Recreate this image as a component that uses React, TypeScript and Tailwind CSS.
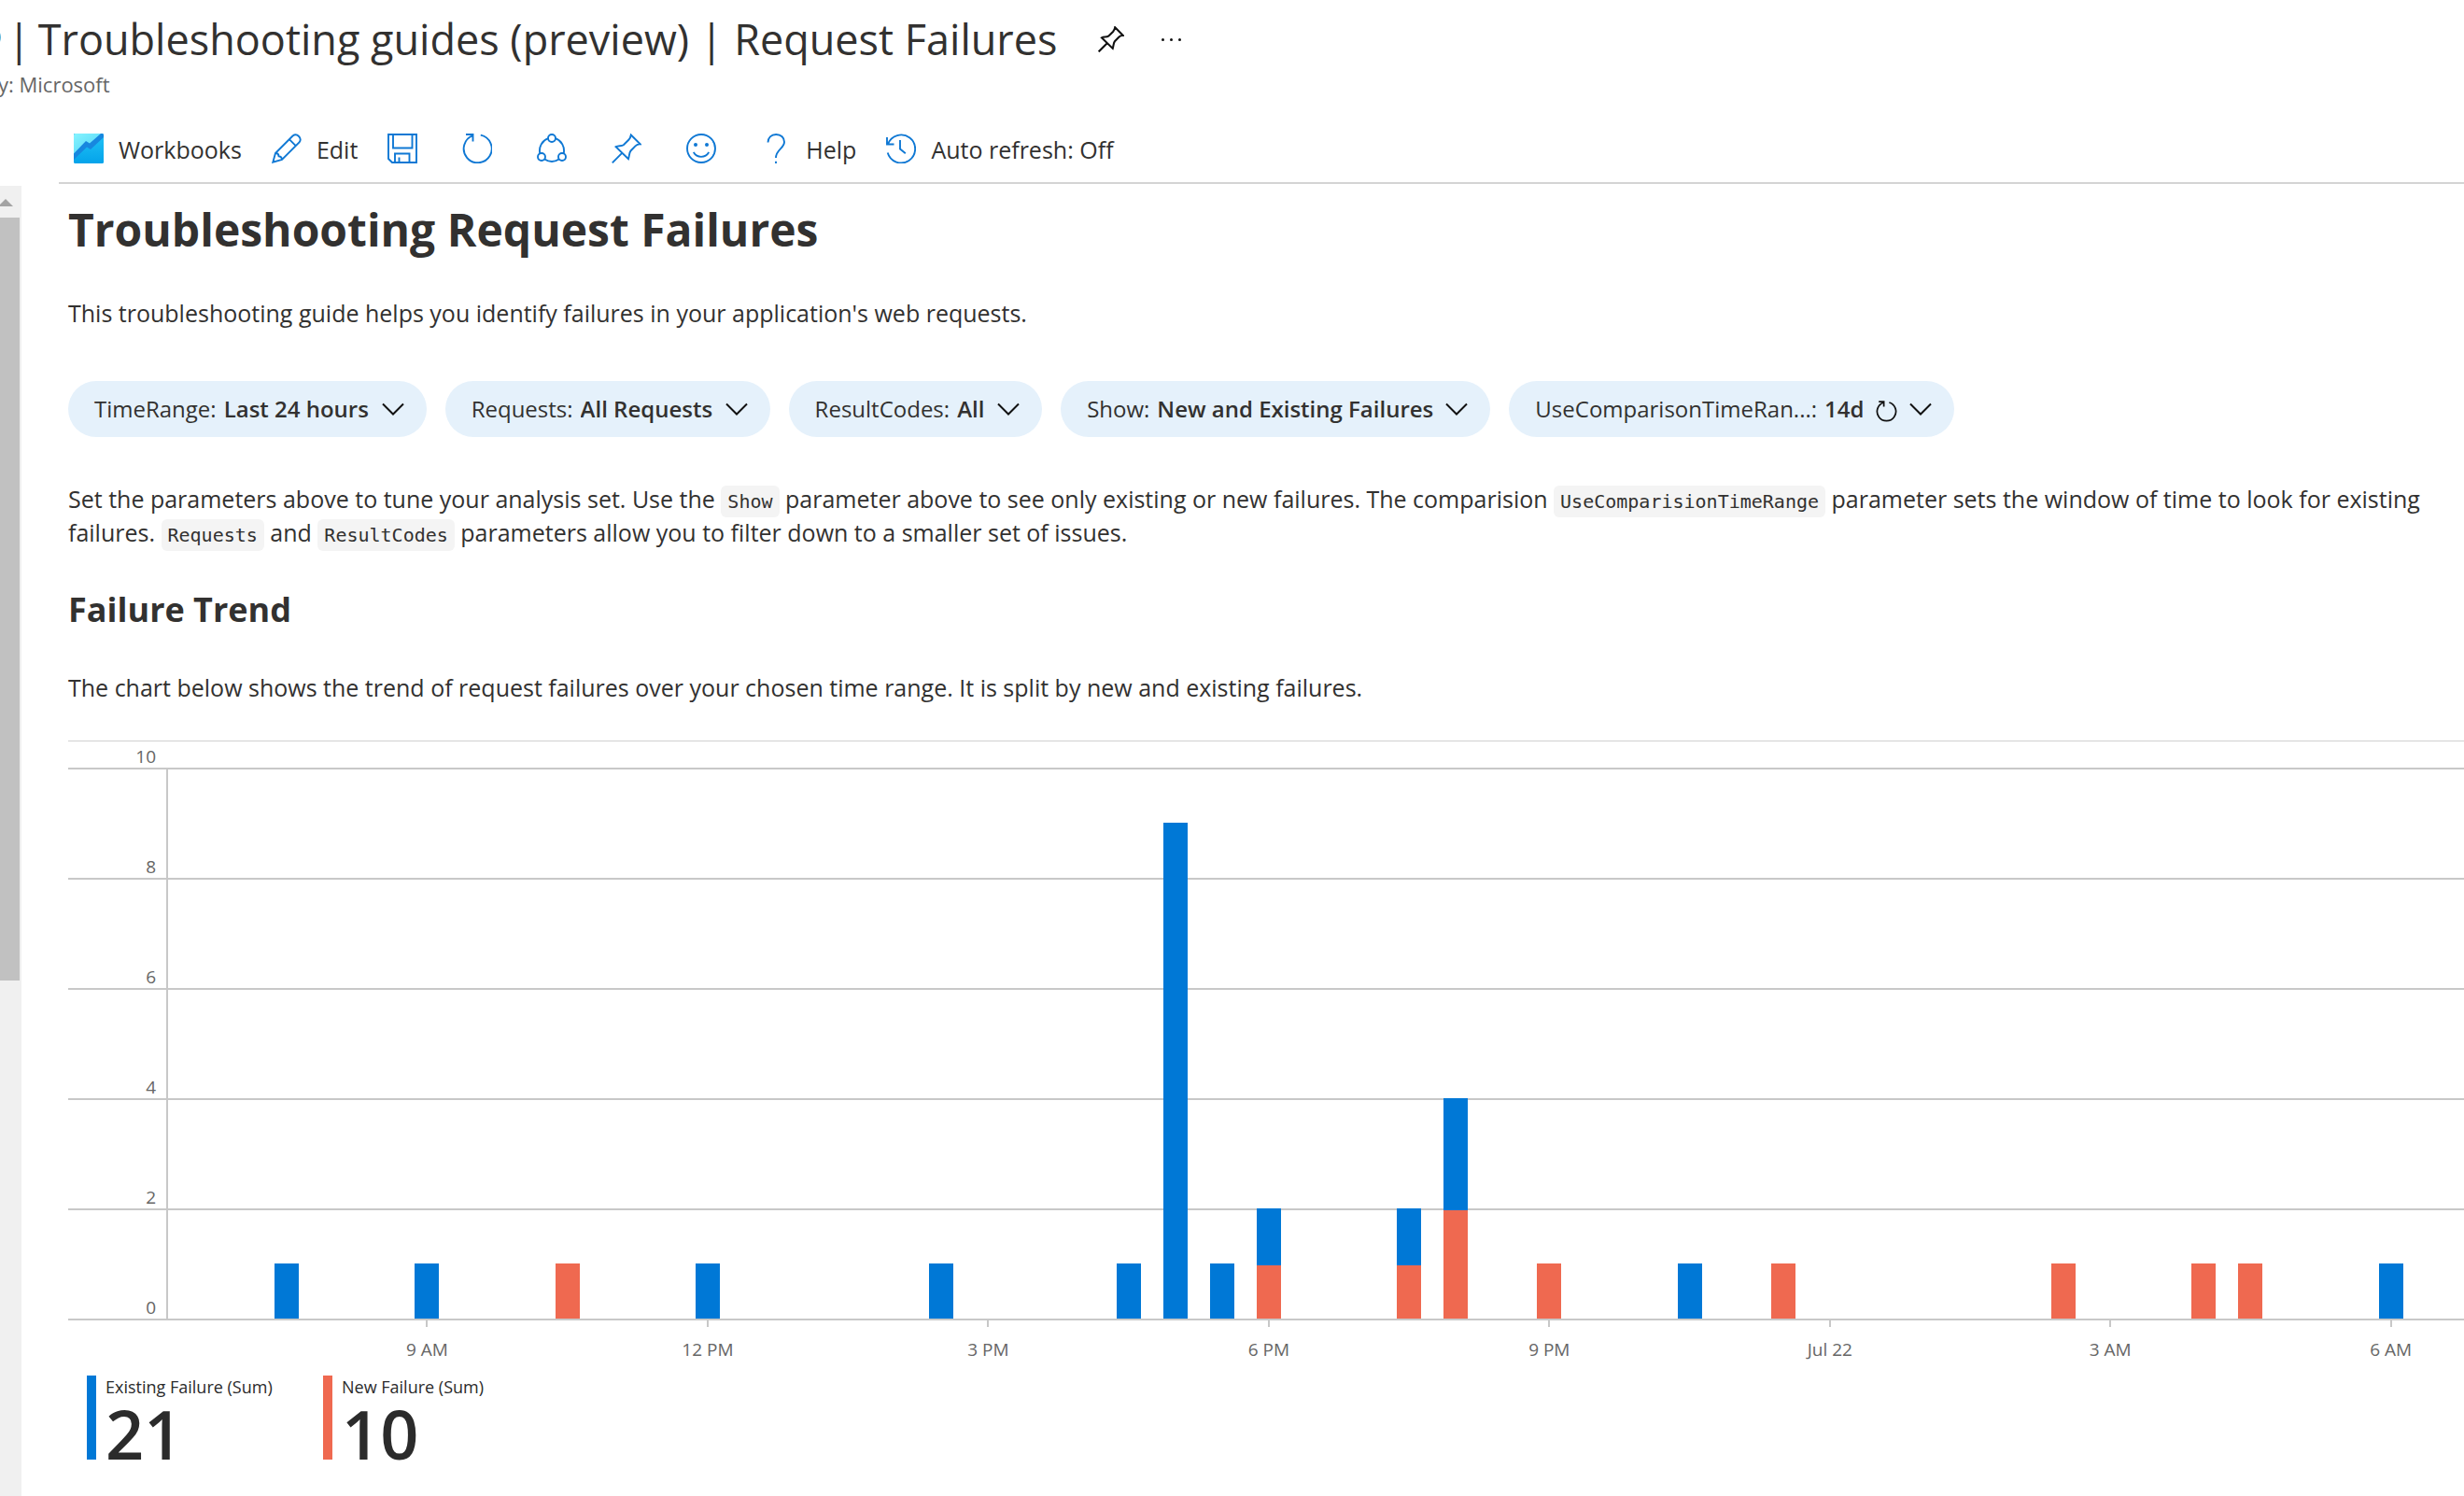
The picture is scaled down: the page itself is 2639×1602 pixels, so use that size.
import type { ReactNode } from "react";

type Slot = { existing?: number; fresh?: number };

const SLOT_COUNT = 49;
const AXIS_MAX = 10;

// Half-hour slots, counted from 6:30 AM.
const slots: Record<number, Slot> = {
  2: { existing: 1 },
  5: { existing: 1 },
  8: { fresh: 1 },
  11: { existing: 1 },
  16: { existing: 1 },
  20: { existing: 1 },
  21: { existing: 9 },
  22: { existing: 1 },
  23: { existing: 1, fresh: 1 },
  26: { existing: 1, fresh: 1 },
  27: { existing: 2, fresh: 2 },
  29: { fresh: 1 },
  32: { existing: 1 },
  34: { fresh: 1 },
  40: { fresh: 1 },
  43: { fresh: 1 },
  44: { fresh: 1 },
  47: { existing: 1 },
};

const ticks: Record<number, string> = {
  5: "9 AM",
  11: "12 PM",
  17: "3 PM",
  23: "6 PM",
  29: "9 PM",
  35: "Jul 22",
  41: "3 AM",
  47: "6 AM",
};

const slotIndexes = Array.from({ length: SLOT_COUNT }, (_, i) => i);

function Icon({ children }: { children: ReactNode }) {
  return (
    <svg viewBox="0 0 32 32" className="size-8 shrink-0" fill="none" stroke="#0f78d4" strokeWidth="1.9" aria-hidden="true">
      {children}
    </svg>
  );
}

const PIN_PATH = "M20.8 1.5 30.7 11.4C28.5 11.3 26.8 12 25.5 13.3L20.5 18.5C19 20.2 19 24 18 27.3L4.6 14.2C7.5 12.6 10.5 13.8 12.8 12.2L18.3 6.8C19.8 5.2 20.5 3.5 20.8 1.5ZM11.2 20.8 0.8 31.3";

function WorkbooksIcon() {
  return (
    <svg viewBox="0 0 32 32" className="size-8 shrink-0" aria-hidden="true">
      <defs>
        <linearGradient id="wb-low" x1="0" y1="0" x2="0" y2="1">
          <stop offset="0" stopColor="#22c3f6" />
          <stop offset="1" stopColor="#04a3ea" />
        </linearGradient>
        <linearGradient id="wb-high" x1="0" y1="0" x2="1" y2="1">
          <stop offset="0" stopColor="#86f4ff" />
          <stop offset="1" stopColor="#4fd3f6" />
        </linearGradient>
        <clipPath id="wb-clip">
          <rect width="32" height="32" rx="1.5" />
        </clipPath>
      </defs>
      <g clipPath="url(#wb-clip)">
        <rect width="32" height="32" fill="url(#wb-low)" />
        <path d="M0 0H32V4L18 17 14 14.500 0 28Z" fill="#1787df" />
        <path d="M0 0H29L17 10.500 13 8 0 21.500Z" fill="url(#wb-high)" />
      </g>
    </svg>
  );
}

function EditIcon() {
  return (
    <Icon>
      <path d="M1.300 30.700 4 21 22.500 2.500A5 5 0 0 1 29.500 9.500L11 28ZM18.800 6.200 25.800 13.200M4 21C6.500 21 7.500 22 7.600 24.400 10 24.500 11 25.500 11 28" />
    </Icon>
  );
}

function SaveIcon() {
  return (
    <Icon>
      <path d="M1 1H31V31H5L1 27ZM6 1V15.500H26.500V1M8 31V21.500H23.500V31M12.500 31V25.500" />
    </Icon>
  );
}

function RefreshIcon() {
  return (
    <Icon>
      <path d="M19.800 1.600A15 15 0 1 1 11.500 2.200M4 1H11.500V8.500" />
    </Icon>
  );
}

function ShareIcon() {
  return (
    <Icon>
      <circle cx="16" cy="5" r="4" />
      <circle cx="5" cy="25" r="4" />
      <circle cx="27" cy="25" r="4" />
      <path d="M12 5.200A14 14 0 0 0 3.300 21.300M20 5.200A14 14 0 0 1 28.700 21.300M8.300 27.500A14 14 0 0 0 23.700 27.500" />
    </Icon>
  );
}

function PinIcon() {
  return (
    <Icon>
      <path d={PIN_PATH} />
    </Icon>
  );
}

function SmileyIcon() {
  return (
    <Icon>
      <circle cx="16" cy="16" r="15" />
      <circle cx="10" cy="12" r="2" fill="#0f78d4" stroke="none" />
      <circle cx="22" cy="12" r="2" fill="#0f78d4" stroke="none" />
      <path d="M7.800 20C11.500 26.500 20.500 26.500 24.200 20" />
    </Icon>
  );
}

function HelpIcon() {
  return (
    <Icon>
      <path d="M7.500 9.500C7.500 4.500 11 1 16.200 1 21.500 1 25 4.500 25 9 25 16 16 17 16 26M16 29.800V32" />
    </Icon>
  );
}

function HistoryIcon() {
  return (
    <Icon>
      <path d="M2 11.500A15 15 0 1 1 1.700 20.500M1 4V11.500H8.500M15 7V16.500L20.800 21.300" />
    </Icon>
  );
}

function ToolButton({ icon, label, name }: { icon: ReactNode; label?: string; name?: string }) {
  return (
    <button type="button" aria-label={name} className="flex items-center gap-4">
      {icon}
      <span className="pt-1">{label}</span>
    </button>
  );
}

function Pill({ id, label, value, refresh }: { id: string; label: string; value: string; refresh?: boolean }) {
  return (
    <div className="flex h-[60px] items-center rounded-full bg-[#e5f1fb] pr-6 pl-7 text-2xl">
      <label htmlFor={id} className="pr-2">{label}:</label>
      <select id={id} defaultValue={value} className="appearance-none bg-transparent font-semibold">
        <option>{value}</option>
      </select>
      {refresh && (
        <svg viewBox="0 0 32 32" className="mt-1 ml-3 size-[23px] shrink-0" fill="none" stroke="#111" strokeWidth="2.400" aria-hidden="true">
          <path d="M20 2.800A14 14 0 1 1 12 2.800M4.500 1.500H12V9" />
        </svg>
      )}
      <svg viewBox="0 0 24 14" className="ml-[13px] h-[14px] w-6 shrink-0" fill="none" stroke="#111" strokeWidth="2" aria-hidden="true">
        <path d="M1 1.500 12 12.500 23 1.500" />
      </svg>
    </div>
  );
}

function Code({ children }: { children: string }) {
  return (
    <code className="rounded-md bg-[#f4f4f4] px-[7px] py-[5px] font-['DejaVu_Sans_Mono',monospace] text-[20px] leading-none">{children}</code>
  );
}

function Bar({ existing = 0, fresh = 0 }: Slot) {
  const total = existing + fresh;
  if (!total) return null;
  return (
    <div className="flex w-[26px] shrink-0 flex-col" style={{ height: `${(total / AXIS_MAX) * 100}%` }}>
      {existing > 0 && <div className="grow bg-[#0078d6]" />}
      {fresh > 0 && (
        <div
          className="bg-[#ef6950]"
          style={{ height: existing ? `calc(${(fresh / total) * 100}% - 2px)` : "100%" }}
        />
      )}
    </div>
  );
}

function TrendChart() {
  return (
    <figure aria-label="Request failures over the last 24 hours" className="border-t border-[#d0d0d0] text-[19px] leading-6 text-[#666]">
      <div className="grid grid-cols-1">
        <div className="col-start-1 row-start-1">
          <div className="flex h-[30px] items-end border-b-2 border-[#c8c8c8]">
            <span className="w-[94px] text-right">10</span>
          </div>
          {[8, 6, 4, 2, 0].map((v) => (
            <div key={v} className="flex h-[118px] items-end border-b-2 border-[#c8c8c8]">
              <span className="w-[94px] text-right">{v}</span>
            </div>
          ))}
        </div>
        <div className="col-start-1 row-start-1 mt-7 mb-0.5 ml-[105px] flex border-l-2 border-[#c8c8c8] pr-[3px] pl-0.5">
          {slotIndexes.map((i) => (
            <div key={i} className="flex min-w-0 flex-1 items-end justify-center">
              <Bar {...slots[i]} />
            </div>
          ))}
        </div>
      </div>
      <div className="ml-[109px] flex h-11 pr-[3px]">
        {slotIndexes.map((i) => (
          <div key={i} className="flex min-w-0 flex-1 flex-col items-center gap-3 whitespace-nowrap">
            {ticks[i] && (
              <>
                <span className="h-[7px] w-0.5 bg-[#c8c8c8]" />
                <span>{ticks[i]}</span>
              </>
            )}
          </div>
        ))}
      </div>
    </figure>
  );
}

function Total({ swatch, label, value }: { swatch: string; label: string; value: number }) {
  return (
    <div className="flex w-[253px] items-start gap-[10px]">
      <span className={`h-[90px] w-[10px] shrink-0 ${swatch}`} />
      <div className="flex flex-col gap-0.5 text-[#2b2b2b]">
        <span className="text-lg leading-6 whitespace-nowrap">{label}</span>
        <span className="text-7xl leading-none font-semibold">{value}</span>
      </div>
    </div>
  );
}

export default function App() {
  return (
    <div className="flex min-h-screen flex-col overflow-x-hidden bg-white font-['Open_Sans',sans-serif] text-[#323130]">
      <header className="relative pt-3">
        <span className="absolute top-[29px] -left-[21px] size-[22px] rounded-full bg-[#59b4d9]" />
        <div className="flex items-center pl-2">
          <h1 className="flex gap-2 text-[45px] leading-[60px] whitespace-nowrap">
            <span>|</span>
            <span>Troubleshooting guides (preview) | Request Failures</span>
          </h1>
          <button type="button" aria-label="Pin to dashboard" className="ml-11">
            <svg viewBox="0 0 32 32" className="size-7" fill="none" stroke="#111" strokeWidth="2.400" aria-hidden="true">
              <path d={PIN_PATH} />
            </svg>
          </button>
          <button type="button" aria-label="More" className="ml-10 flex gap-1.5">
            <span className="size-[3px] rounded-full bg-[#111]" />
            <span className="size-[3px] rounded-full bg-[#111]" />
            <span className="size-[3px] rounded-full bg-[#111]" />
          </button>
        </div>
        <p className="mt-0.5 -ml-0.5 text-[22px] leading-8 text-[#666]">y: Microsoft</p>
      </header>

      <nav aria-label="Workbook commands" className="mt-4 ml-[63px] flex h-[75px] items-center gap-8 border-b-2 border-[#d4d4d4] pl-4 text-[25px]">
        <ToolButton icon={<WorkbooksIcon />} label="Workbooks" />
        <ToolButton icon={<EditIcon />} label="Edit" />
        <ToolButton icon={<SaveIcon />} name="Save" />
        <ToolButton icon={<RefreshIcon />} name="Refresh" />
        <ToolButton icon={<ShareIcon />} name="Share" />
        <ToolButton icon={<PinIcon />} name="Pin" />
        <ToolButton icon={<SmileyIcon />} name="Feedback" />
        <ToolButton icon={<HelpIcon />} label="Help" />
        <ToolButton icon={<HistoryIcon />} label="Auto refresh: Off" />
      </nav>

      <div className="flex grow">
        <div aria-hidden="true" className="mt-0.5 flex w-[23px] shrink-0 flex-col bg-[#f0f0f0]">
          <svg viewBox="0 0 14 34" className="h-[34px] w-[14px]">
            <path d="M-2 22 6 14 14 22Z" fill="#a3a3a3" />
          </svg>
          <div className="h-[817px] w-[21px] bg-[#c1c1c1]" />
        </div>

        <main className="min-w-0 grow pt-[19px] pl-[50px] text-[25px] leading-9">
          <h2 className="text-[48px] leading-[60px] font-bold">Troubleshooting Request Failures</h2>
          <p className="mt-[41px]">This troubleshooting guide helps you identify failures in your application's web requests.</p>

          <div className="mt-[55px] flex flex-wrap gap-5">
            <Pill id="time-range" label="TimeRange" value="Last 24 hours" />
            <Pill id="requests" label="Requests" value="All Requests" />
            <Pill id="result-codes" label="ResultCodes" value="All" />
            <Pill id="show" label="Show" value="New and Existing Failures" />
            <Pill id="comparison" label="UseComparisonTimeRan..." value="14d" refresh />
          </div>

          <p className="mt-12 pr-6">
            Set the parameters above to tune your analysis set. Use the <Code>Show</Code> parameter above to see only
            existing or new failures. The comparision <Code>UseComparisionTimeRange</Code> parameter sets the window of
            time to look for existing failures. <Code>Requests</Code> and <Code>ResultCodes</Code> parameters allow you
            to filter down to a smaller set of issues.
          </p>

          <h3 className="mt-[41px] text-[36px] leading-[48px] font-bold">Failure Trend</h3>
          <p className="mt-[41px] mb-[39px]">
            The chart below shows the trend of request failures over your chosen time range. It is split by new and
            existing failures.
          </p>

          <TrendChart />
          <div className="mt-[15px] ml-5 flex">
            <Total swatch="bg-[#0078d6]" label="Existing Failure (Sum)" value={21} />
            <Total swatch="bg-[#ef6950]" label="New Failure (Sum)" value={10} />
          </div>
        </main>
      </div>
    </div>
  );
}
